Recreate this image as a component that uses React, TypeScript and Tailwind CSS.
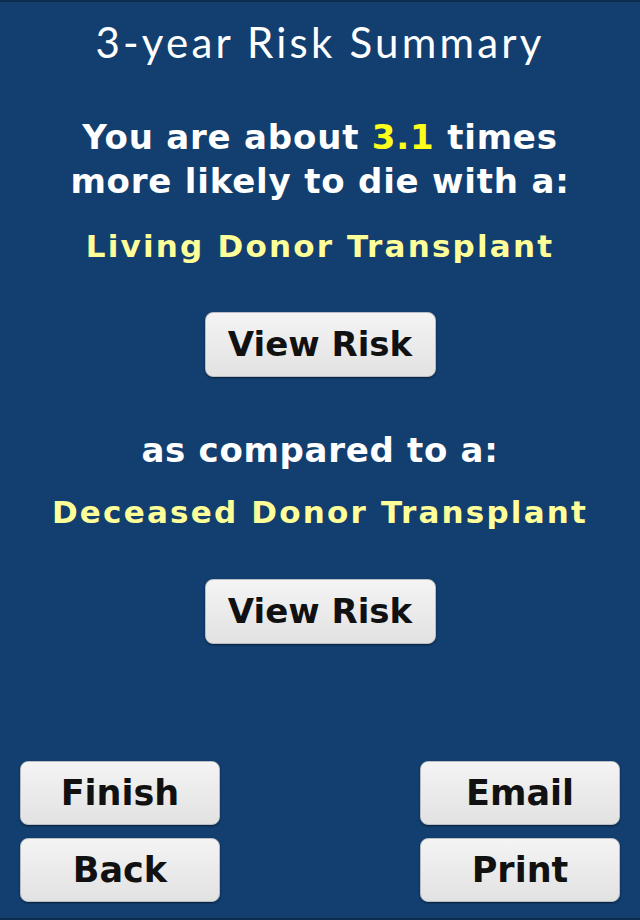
import React from "react";

const boldFont = { fontFamily: "'DejaVu Sans', Verdana, sans-serif" };
const titleFont = { fontFamily: "Lato, 'Open Sans', sans-serif" };

function GrayButton({ label, className }: { label: string; className?: string }) {
  return (
    <button
      className={`flex items-center justify-center rounded-[8px] border border-[#b8bcc4] bg-gradient-to-b from-[#f4f4f4] to-[#e2e2e2] font-bold text-[#111] shadow-[0_1px_2px_rgba(0,0,0,0.5)] ${className ?? ""}`}
      style={boldFont}
    >
      {label}
    </button>
  );
}

export default function App() {
  return (
    <div
      className="flex h-[920px] w-[640px] flex-col items-center border-t-2 border-b-2 border-t-[#0c2b4e] border-b-[#0c2b4e] bg-[#123f70] text-white"
      style={boldFont}
    >
      <h1 className="mt-[16px] text-[42px] font-normal leading-[48px] tracking-[3.2px]" style={titleFont}>
        3-year Risk Summary
      </h1>

      <p className="mt-[49px] text-center text-[34px] font-bold leading-[44px] tracking-[0.8px]">
        You are about <span className="text-[#ffff1a]">3.1</span> times
        <br />
        more likely to die with a:
      </p>

      <p className="mt-[25px] text-[31px] font-bold leading-[36px] tracking-[2.2px] text-[#ffff99]">
        Living Donor Transplant
      </p>

      <GrayButton label="View Risk" className="mt-[48px] h-[65px] w-[231px] text-[34px]" />

      <p className="mt-[53px] text-[34px] font-bold leading-[40px] tracking-[0.7px]">as compared to a:</p>

      <p className="mt-[24px] text-[31px] font-bold leading-[36px] tracking-[2.2px] text-[#ffff99]">
        Deceased Donor Transplant
      </p>

      <GrayButton label="View Risk" className="mt-[49px] h-[65px] w-[231px] text-[34px]" />

      <div className="mt-auto mb-[16px] grid w-full grid-cols-[200px_200px] justify-between gap-y-[13px] px-[20px]">
        <GrayButton label="Finish" className="h-[64px] text-[35px]" />
        <GrayButton label="Email" className="h-[64px] text-[35px]" />
        <GrayButton label="Back" className="h-[64px] text-[35px]" />
        <GrayButton label="Print" className="h-[64px] text-[35px]" />
      </div>
    </div>
  );
}
